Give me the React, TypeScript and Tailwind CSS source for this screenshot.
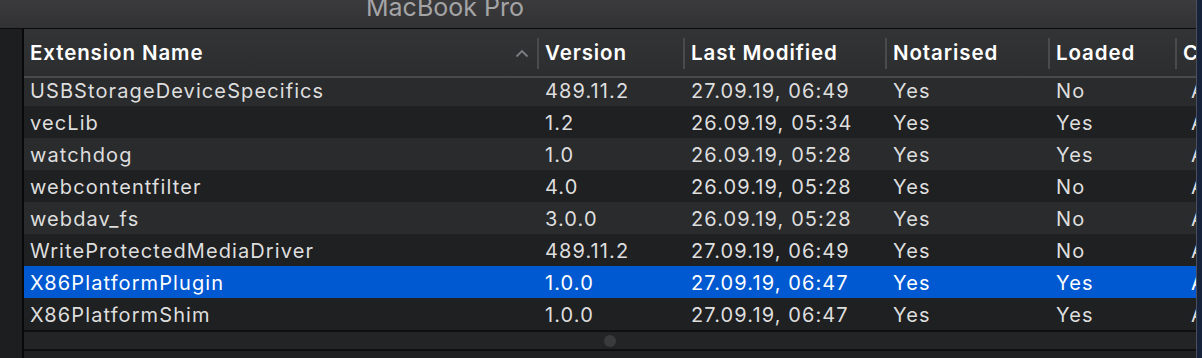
const columns = ["Extension Name", "Version", "Last Modified", "Notarised", "Loaded", "C"];

const rows = [
  ["USBStorageDeviceSpecifics", "489.11.2", "27.09.19, 06:49", "Yes", "No", "A"],
  ["vecLib", "1.2", "26.09.19, 05:34", "Yes", "Yes", "A"],
  ["watchdog", "1.0", "26.09.19, 05:28", "Yes", "Yes", "A"],
  ["webcontentfilter", "4.0", "26.09.19, 05:28", "Yes", "No", "A"],
  ["webdav_fs", "3.0.0", "26.09.19, 05:28", "Yes", "No", "A"],
  ["WriteProtectedMediaDriver", "489.11.2", "27.09.19, 06:49", "Yes", "No", "A"],
  ["X86PlatformPlugin", "1.0.0", "27.09.19, 06:47", "Yes", "Yes", "A"],
  ["X86PlatformShim", "1.0.0", "27.09.19, 06:47", "Yes", "Yes", "A"],
];

const grid = "grid grid-cols-[513px_146px_202px_163px_127px_1fr]";

export default function App() {
  return (
    <div
      className="flex h-[358px] w-[1202px] overflow-hidden bg-[#1f2022]"
      style={{ fontFamily: "Inter, 'Noto Sans', 'Liberation Sans', sans-serif" }}
    >
      <div className="flex w-[1196px] flex-col">
        {/* title bar */}
        <div className="relative h-[28px] shrink-0 overflow-hidden bg-gradient-to-b from-[#3b3b3d] to-[#323234]">
          <div className="absolute left-[366px] top-[-8px] text-[25px] leading-[30px] text-[#a4a4a6]">
            MacBook Pro
          </div>
        </div>
        <div className="h-[1px] shrink-0 bg-[#0c0c0d]" />

        <div className="flex flex-1">
          <div className="w-[22px] bg-[#1d1e20]" />
          <div className="w-[2px] bg-[#09090a]" />

          <div className="flex flex-1 flex-col overflow-hidden bg-[#1f2022]">
            {/* header */}
            <div
              className={`${grid} relative z-10 h-[49px] shrink-0 border-b-2 border-[#48494b] bg-gradient-to-b from-[#333436] to-[#2c2d2f]`}
            >
              {columns.map((c, i) => (
                <div
                  key={c}
                  className={`relative flex items-center pt-[2px] text-[20.5px] font-semibold tracking-[0.9px] text-white ${
                    i === 0 ? "pl-[6px]" : "pl-[8px]"
                  }`}
                >
                  {i > 0 && <div className="absolute left-0 top-[9px] h-[31px] w-[2px] bg-[#4a4b4d]" />}
                  <span>{c}</span>
                  {i === 0 && (
                    <svg
                      className="absolute right-[8px] top-[20px]"
                      width="14"
                      height="9"
                      viewBox="0 0 14 9"
                      fill="none"
                    >
                      <path d="M1.5 7.5 L7 2 L12.5 7.5" stroke="#7c7d80" strokeWidth="1.8" />
                    </svg>
                  )}
                </div>
              ))}
            </div>

            {/* rows (scroll under the header) */}
            <div className="mt-[-4px] flex shrink-0 flex-col">
              {rows.map((r, ri) => {
                const selected = ri === 6;
                const bg = selected ? "bg-[#0059d1]" : ri % 2 === 0 ? "bg-[#2a2b2d]" : "bg-[#1f2022]";
                return (
                  <div key={r[0]} className={`${grid} h-[32px] ${bg}`}>
                    {r.map((cell, ci) => (
                      <div
                        key={ci}
                        className={`flex items-center overflow-hidden whitespace-nowrap pt-[2px] text-[20px] tracking-[1.1px] ${
                          selected ? "text-white" : "text-[#dedede]"
                        } ${ci === 0 ? "pl-[6px]" : ci === 5 ? "pl-[16px]" : "pl-[8px]"}`}
                      >
                        {cell}
                      </div>
                    ))}
                  </div>
                );
              })}
            </div>

            {/* horizontal scroll area */}
            <div className="flex h-[21px] shrink-0 items-center border-y-2 border-[#0f0f10] bg-[#232426]">
              <div className="ml-[580px] h-[12px] w-[12px] rounded-full bg-[#3a3b3d]" />
            </div>
            <div className="flex-1 bg-[#202123]" />
          </div>
        </div>
      </div>
      <div className="w-[1px] bg-[#4a4f5a]" />
      <div className="flex-1 bg-[#17233a]" />
    </div>
  );
}
